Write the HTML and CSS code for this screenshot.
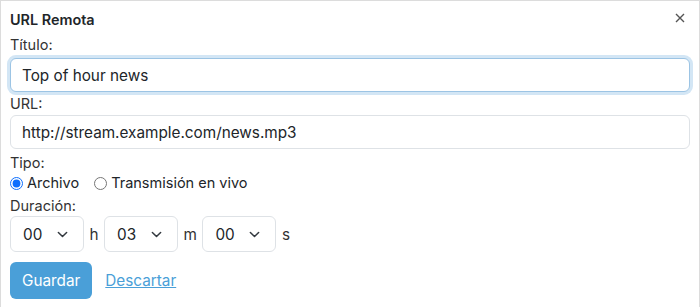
FILE: index.html
```html
<!DOCTYPE html>
<html lang="es">
<head>
    <meta charset="UTF-8">
    <meta name="viewport" content="width=device-width, initial-scale=1.0">
    <title>URL Remota</title>
    <link rel="stylesheet" href="styles.css">
</head>
<body>
    <div class="panel">
        <!-- Header -->
        <div class="panel-header">
            <span class="panel-title">URL Remota</span>
            <button class="close-btn" aria-label="Cerrar">
                <svg width="10" height="10" viewBox="0 0 10 10">
                    <path d="M1 1 L9 9 M9 1 L1 9" stroke="#555" stroke-width="1.4" fill="none"/>
                </svg>
            </button>
        </div>

        <label class="field-label" for="title">Título:</label>
        <input class="text-input focused" type="text" id="title" value="Top of hour news">

        <label class="field-label" for="url">URL:</label>
        <input class="text-input" type="text" id="url" value="http://stream.example.com/news.mp3">

        <div class="field-label">Tipo:</div>
        <div class="radio-row">
            <label class="radio-option"><input type="radio" name="tipo" checked> Archivo</label>
            <label class="radio-option"><input type="radio" name="tipo"> Transmisión en vivo</label>
        </div>

        <div class="field-label">Duración:</div>
        <div class="duration-row">
            <select class="time-select"><option>00</option></select>
            <span class="unit">h</span>
            <select class="time-select"><option>03</option></select>
            <span class="unit">m</span>
            <select class="time-select"><option>00</option></select>
            <span class="unit">s</span>
        </div>

        <div class="actions">
            <button class="save-btn">Guardar</button>
            <a href="#" class="discard-link">Descartar</a>
        </div>
    </div>
</body>
</html>
```

FILE: styles.css
```css
/* Global Styles */
body {
    font-family: Inter, "Noto Sans", sans-serif;
    margin: 0;
    padding: 0;
    background-color: #fff;
    color: #212529;
}

/* Panel */
.panel {
    border: 1px solid #dcdcdc;
    border-bottom: none;
    height: 306px;
    padding: 0 9px;
}

.panel-header {
    display: flex;
    justify-content: space-between;
    align-items: center;
    height: 34px;
    padding-top: 2px;
    box-sizing: border-box;
}

.panel-title {
    font-weight: 600;
    font-size: 14.4px;
}

.close-btn {
    border: none;
    background: none;
    padding: 0;
    width: 10px;
    height: 10px;
    margin-right: 5px;
    margin-top: -3px;
    cursor: pointer;
    display: flex;
}

/* Fields */
.field-label {
    display: block;
    font-size: 14.5px;
    line-height: 20px;
    color: #333;
}

.text-input {
    display: block;
    width: 100%;
    box-sizing: border-box;
    height: 34px;
    margin: 1px 0 4px;
    padding: 0 11px;
    font-family: inherit;
    font-size: 15.3px;
    color: #212529;
    border: 1px solid #dee2e6;
    border-radius: 6px;
    outline: none;
}

.text-input.focused {
    border-color: #9cc4e4;
    box-shadow: 0 0 0 3px #d3e6f5;
    margin-top: 3px;
    margin-bottom: 2px;
}

/* Radios */
.radio-row {
    display: flex;
    gap: 15px;
    font-size: 14.5px;
    line-height: 20px;
    margin-bottom: 3px;
}

.radio-option {
    display: flex;
    align-items: center;
    gap: 4px;
}

.radio-option input {
    margin: 0;
    width: 13px;
    height: 13px;
    accent-color: #0d6efd;
}

/* Duration */
.duration-row {
    display: flex;
    align-items: center;
    gap: 5.5px;
}

.time-select {
    appearance: none;
    width: 74px;
    height: 36px;
    box-sizing: border-box;
    padding: 0 12px;
    font-family: inherit;
    font-size: 15.3px;
    color: #212529;
    background-color: #fff;
    border: 1px solid #dee2e6;
    border-radius: 6px;
    background-image: url("data:image/svg+xml,%3csvg xmlns='http://www.w3.org/2000/svg' viewBox='0 0 16 16'%3e%3cpath fill='none' stroke='%23343a40' stroke-linecap='round' stroke-linejoin='round' stroke-width='2.2' d='m2 5 6 6 6-6'/%3e%3c/svg%3e");
    background-repeat: no-repeat;
    background-position: right 14px center;
    background-size: 13px 11px;
}

.unit {
    font-size: 15.3px;
    color: #333;
}

/* Actions */
.actions {
    display: flex;
    align-items: center;
    gap: 13px;
    margin-top: 10px;
}

.save-btn {
    background-color: #4a9fd8;
    color: white;
    font-family: inherit;
    font-size: 15.3px;
    border: none;
    border-radius: 6px;
    padding: 0 12px;
    height: 37px;
    cursor: pointer;
}

.discard-link {
    color: #4a9fd8;
    font-size: 15.3px;
}
```
